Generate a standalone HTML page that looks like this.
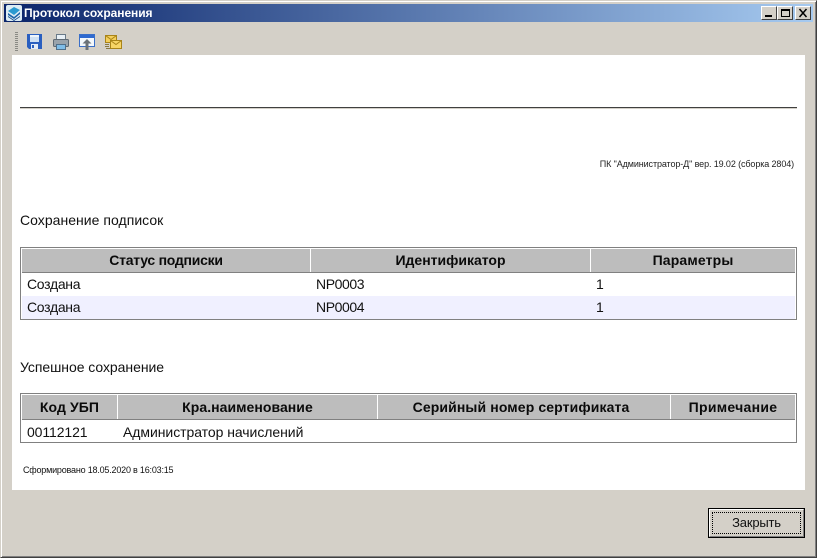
<!DOCTYPE html>
<html lang="ru">
<head>
<meta charset="utf-8">
<style>
html,body{margin:0;padding:0}
body{width:817px;height:558px;overflow:hidden;position:relative;background:#d4d0c8;font-family:"Liberation Sans",sans-serif;color:#111}
.a{position:absolute}
.t{position:absolute;white-space:nowrap;font-size:14px;line-height:17px;letter-spacing:0}
.h{position:absolute;background:#bdbdbd;font-weight:bold;font-size:14px;line-height:23px;text-align:center;color:#0a0a0a;white-space:nowrap}
.b{position:absolute;top:6px;width:16px;height:14px;background:#d4d0c8;border:1px solid;border-color:#fff #404040 #404040 #fff;box-sizing:border-box}
</style>
</head>
<body>
<div class="a" style="left:0;top:0;width:817px;height:558px;box-sizing:border-box;border:1px solid;border-color:#d4d0c8 #404040 #404040 #d4d0c8;box-shadow:inset 1px 1px 0 #fff,inset -1px -1px 0 #808080"></div>
<div class="a" style="left:4px;top:4px;width:809px;height:18px;background:linear-gradient(90deg,#0a246a,#a6caf0)"></div>

<svg class="a" style="left:6px;top:5px" width="16" height="16" viewBox="0 0 16 16">
<rect width="16" height="16" rx="2" fill="#dcecf4"/>
<path d="M2 6 8 2l6 3-6 5z" fill="#2a9ad0"/>
<path d="M2 8l6 4 6-5v2l-6 5-6-4z" fill="#1b64a8"/>
<path d="M2 11l6 4 6-4v1l-6 4-6-4z" fill="#124a8a"/>
</svg>
<div class="t" style="left:24px;top:5px;font-weight:bold;font-size:12px;line-height:16px;color:#fff;letter-spacing:-.07px">Протокол сохранения</div>

<div class="b" style="left:761px"><div class="a" style="left:3px;top:8px;width:7px;height:2px;background:#000"></div></div>
<div class="b" style="left:777px"><div class="a" style="left:3px;top:2px;width:9px;height:8px;box-sizing:border-box;border:1px solid #000;border-top-width:2px"></div></div>
<div class="b" style="left:795px"><svg class="a" style="left:2px;top:1px" width="11" height="10" viewBox="0 0 11 10"><path d="M1.500 1l7 8M8.500 1l-7 8" stroke="#000" stroke-width="1.500" fill="none"/></svg></div>

<div class="a" style="left:15px;top:32px;width:3px;height:20px;background:repeating-linear-gradient(180deg,#8a8a84 0 1px,#d4d0c8 1px 2px)"></div>

<svg class="a" style="left:27px;top:34px" width="15" height="15" viewBox="0 0 15 15">
<path d="M0 0h15v15H2l-2-2z" fill="#2a5fc0"/>
<rect x="3" y="1" width="9" height="7" fill="#cfe0f4"/>
<rect x="3" y="1" width="9" height="2" fill="#eef4fb"/>
<rect x="4" y="10" width="7" height="5" fill="#e4ecf6"/>
<rect x="5" y="11" width="2" height="3" fill="#2a5fc0"/>
</svg>
<svg class="a" style="left:53px;top:34px" width="16" height="16" viewBox="0 0 16 16">
<rect x="3.500" y=".5" width="9" height="6" fill="#e8f0f6" stroke="#6a7a88"/>
<rect x=".5" y="5.500" width="15" height="7" rx="1" fill="#9aa3ab" stroke="#5f6a74"/>
<rect x="3.500" y="10.500" width="9" height="5" fill="#7fbde8" stroke="#4f6f8a"/>
</svg>
<svg class="a" style="left:79px;top:34px" width="16" height="16" viewBox="0 0 16 16">
<rect x=".5" y=".5" width="15" height="12" fill="#f4f8fc" stroke="#3a6fc8"/>
<rect x="1" y="1" width="14" height="3" fill="#2f6ad0"/>
<path d="M8 5 3.500 9.500H6.500V16h3V9.500h3z" fill="#6b7278"/>
</svg>
<svg class="a" style="left:105px;top:35px" width="17" height="14" viewBox="0 0 17 14">
<rect x=".5" y=".5" width="11" height="7" fill="#f4cf5c" stroke="#a98418"/>
<path d="M.5.5l5.500 4 5.500-4" fill="none" stroke="#a98418"/>
<rect x="5.500" y="5.500" width="11" height="8" fill="#f7d566" stroke="#a98418"/>
<path d="M5.500 5.500l5.500 4 5.500-4" fill="none" stroke="#a98418"/>
<path d="M0 9.500h4M0 11.500h4M1 13.500h4" stroke="#8a7a40"/>
</svg>

<div class="a" style="left:12px;top:55px;width:793px;height:435px;background:#fff"></div>

<div class="a" style="left:20px;top:107px;width:777px;height:1px;background:#404040"></div>
<div class="a" style="left:20px;top:108px;width:777px;height:1px;background:#d4d0c8"></div>

<div class="t" style="right:23px;top:158px;font-size:9px;line-height:12px;letter-spacing:-.11px;color:#222">ПК "Администратор-Д" вер. 19.02 (сборка 2804)</div>

<div class="t" style="left:20px;top:212px;letter-spacing:.03px">Сохранение подписок</div>

<div class="a" style="left:20px;top:247px;width:777px;height:73px;box-sizing:border-box;border:1px solid #808080"></div>
<div class="h" style="left:22px;top:249px;width:288px;letter-spacing:-.25px">Статус подписки</div>
<div class="h" style="left:311px;top:249px;width:279px">Идентификатор</div>
<div class="h" style="left:591px;top:249px;width:204px;letter-spacing:.15px">Параметры</div>
<div class="a" style="left:22px;top:272px;width:773px;height:1px;background:#808080"></div>
<div class="a" style="left:22px;top:296px;width:773px;height:23px;background:#f0f0ff"></div>
<div class="t" style="left:27px;top:276px;letter-spacing:-.3px">Создана</div>
<div class="t" style="left:316px;top:276px;letter-spacing:-.4px">NP0003</div>
<div class="t" style="left:596px;top:276px">1</div>
<div class="t" style="left:27px;top:299px;letter-spacing:-.3px">Создана</div>
<div class="t" style="left:316px;top:299px;letter-spacing:-.4px">NP0004</div>
<div class="t" style="left:596px;top:299px">1</div>

<div class="t" style="left:20px;top:359px;letter-spacing:-.05px">Успешное сохранение</div>

<div class="a" style="left:20px;top:393px;width:777px;height:50px;box-sizing:border-box;border:1px solid #808080"></div>
<div class="h" style="left:22px;top:395px;width:95px;line-height:24px;height:24px;letter-spacing:.1px">Код УБП</div>
<div class="h" style="left:118px;top:395px;width:259px;line-height:24px;height:24px;letter-spacing:.05px">Кра.наименование</div>
<div class="h" style="left:378px;top:395px;width:286px;padding-right:6px;line-height:24px;height:24px;letter-spacing:.12px">Серийный номер сертификата</div>
<div class="h" style="left:671px;top:395px;width:124px;line-height:24px;height:24px;letter-spacing:.3px">Примечание</div>
<div class="a" style="left:22px;top:419px;width:773px;height:1px;background:#808080"></div>
<div class="t" style="left:27px;top:424px;letter-spacing:-.1px">00112121</div>
<div class="t" style="left:123px;top:424px;letter-spacing:-.05px">Администратор начислений</div>

<div class="t" style="left:23px;top:464px;font-size:9px;line-height:12px;letter-spacing:-.2px;color:#111">Сформировано 18.05.2020 в 16:03:15</div>

<div class="a" style="left:708px;top:508px;width:97px;height:30px;box-sizing:border-box;border:1px solid #000;background:#d4d0c8">
<div class="a" style="left:0;top:0;width:95px;height:28px;box-sizing:border-box;border:1px solid;border-color:#fff #808080 #808080 #fff"></div>
<div class="a" style="left:3px;top:3px;width:89px;height:22px;box-sizing:border-box;border:1px dotted #000"></div>
<div class="a" style="left:0;top:5px;width:95px;text-align:center;font-size:13px;line-height:18px;letter-spacing:-.2px;color:#111">Закрыть</div>
</div>
</body>
</html>
